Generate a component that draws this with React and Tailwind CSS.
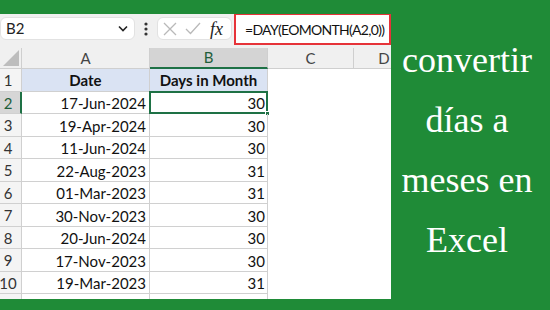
import React from "react";

const rows = [
  ["17-Jun-2024", 30],
  ["19-Apr-2024", 30],
  ["11-Jun-2024", 30],
  ["22-Aug-2023", 31],
  ["01-Mar-2023", 31],
  ["30-Nov-2023", 30],
  ["20-Jun-2024", 30],
  ["17-Nov-2023", 30],
  ["19-Mar-2023", 31],
];

function RowHead({ n, active }) {
  return (
    <div
      className={`w-[22px] flex-none h-full overflow-hidden border-r border-b border-[#d0d0d0] ${
        active ? "bg-[#d6d6d6] border-r-2 border-r-[#1e7145] text-[#1e5e3a]" : "bg-[#f4f4f4] text-[#333]"
      }`}
    >
      <div className="w-[28px] -ml-[6px] h-full flex items-center justify-center text-[15px] pt-[1px]">{n}</div>
    </div>
  );
}

function Toolbar() {
  return (
    <div className="h-[34px] flex-none bg-[#f0f0f0] flex items-start">
      <div className="mt-[3px] w-[135px] h-[23px] flex-none bg-white rounded-md border border-[#e2e2e2] flex items-center justify-between pl-[5px] pr-[6px]">
        <span className="text-[15px] text-[#222]">B2</span>
        <svg width="10" height="7" viewBox="0 0 10 7">
          <path d="M1 1.5 L5 5.5 L9 1.5" fill="none" stroke="#222" strokeWidth="1.6" />
        </svg>
      </div>
      <div className="w-[22px] h-[29px] flex-none flex items-center justify-center">
        <svg width="4" height="14" viewBox="0 0 4 14">
          <circle cx="2" cy="2" r="1.6" fill="#333" />
          <circle cx="2" cy="7" r="1.6" fill="#333" />
          <circle cx="2" cy="12" r="1.6" fill="#333" />
        </svg>
      </div>
      <div className="mt-[3px] w-[75px] h-[23px] flex-none bg-white rounded-md border border-[#e2e2e2] flex items-center pl-[5px]">
        <svg width="14" height="14" viewBox="0 0 14 14">
          <path d="M1 1 L13 13 M13 1 L1 13" stroke="#b9b9b9" strokeWidth="1.3" />
        </svg>
        <svg width="16" height="13" viewBox="0 0 16 13" className="ml-[8px]">
          <path d="M1 7 L5.5 11.5 L15 1" fill="none" stroke="#b9b9b9" strokeWidth="1.3" />
        </svg>
        <span className="ml-[9px] text-[18px] italic text-[#222] leading-none" style={{ fontFamily: '"Liberation Serif", serif' }}>
          fx
        </span>
      </div>
      <div className="-mt-[1px] ml-[2px] w-[157px] h-[32px] flex-none bg-white border-2 border-[#e63339] flex items-center pl-[9px]">
        <span className="text-[14px] tracking-[-0.7px] text-[#111] whitespace-nowrap">=DAY(EOMONTH(A2,0))</span>
      </div>
    </div>
  );
}

function Sheet() {
  return (
    <div className="flex-1 flex flex-col bg-white">
      <div className="h-[21px] flex-none flex bg-[#f0f0f0] text-[15px] text-[#444]">
        <div className="w-[22px] flex-none border-r border-b border-[#cfcfcf] flex items-end justify-end p-[2px]">
          <svg width="16" height="16" viewBox="0 0 16 16">
            <polygon points="16,0 16,16 0,16" fill="#bdbdbd" />
          </svg>
        </div>
        <div className="w-[128px] flex-none border-r border-b border-[#cfcfcf] flex items-center justify-center">A</div>
        <div className="w-[118px] flex-none bg-[#d4d4d4] border-r border-[#cfcfcf] border-b-2 border-b-[#1e7145] text-[#1e5e3a] flex items-center justify-center">B</div>
        <div className="w-[86px] flex-none border-r border-b border-[#cfcfcf] flex items-center justify-center">C</div>
        <div className="w-[60px] flex-none border-b border-[#cfcfcf] flex items-center justify-center">D</div>
      </div>

      <div className="h-[22.5px] flex-none flex">
        <RowHead n={1} />
        <div className="w-[128px] flex-none bg-[#dae3f3] border-r border-b border-[#d0d0d0] flex items-center justify-center font-bold text-[15px] text-[#111] pt-[1px]">
          Date
        </div>
        <div className="w-[118px] flex-none bg-[#dae3f3] border-r border-b border-[#d0d0d0] flex items-center justify-center font-bold text-[15px] text-[#111] pt-[1px]">
          Days in Month
        </div>
      </div>

      {rows.map(([d, v], i) => (
        <div key={d} className="h-[22.5px] flex-none flex">
          <RowHead n={i + 2} active={i === 0} />
          <div className="w-[128px] flex-none border-r border-b border-[#d0d0d0] flex items-center justify-end pr-[3px] text-[15px] text-[#111] pt-[2px]">
            {d}
          </div>
          <div className="relative w-[118px] flex-none border-r border-b border-[#d0d0d0] flex items-center justify-end pr-[2px] text-[15px] text-[#111] pt-[2px]">
            {v}
            {i === 0 && (
              <>
                <div className="absolute -top-[1px] -left-[1px] -right-[1px] -bottom-[1px] border-2 border-[#1e7145]" />
                <div className="absolute -bottom-[3px] -right-[3px] w-[5px] h-[5px] bg-[#1e7145] border border-white" />
              </>
            )}
          </div>
        </div>
      ))}

      <div className="flex-1 flex">
        <div className="w-[22px] flex-none bg-[#f4f4f4] border-r border-[#d0d0d0]" />
        <div className="w-[128px] flex-none border-r border-[#d0d0d0]" />
        <div className="w-[118px] flex-none border-r border-[#d0d0d0]" />
      </div>
    </div>
  );
}

export default function App() {
  return (
    <div className="w-[550px] h-[310px] bg-[#1f8b37] flex overflow-hidden" style={{ fontFamily: "Lato, sans-serif" }}>
      <div className="mt-[14px] w-[391px] h-[285px] flex-none flex flex-col overflow-hidden bg-white">
        <Toolbar />
        <Sheet />
      </div>
      <div
        className="flex-1 flex flex-col items-center pt-[30px] pr-[7px] text-white text-[36px] leading-[60px]"
        style={{ fontFamily: '"Liberation Serif", serif' }}
      >
        <div>convertir</div>
        <div>días a</div>
        <div>meses en</div>
        <div>Excel</div>
      </div>
    </div>
  );
}
